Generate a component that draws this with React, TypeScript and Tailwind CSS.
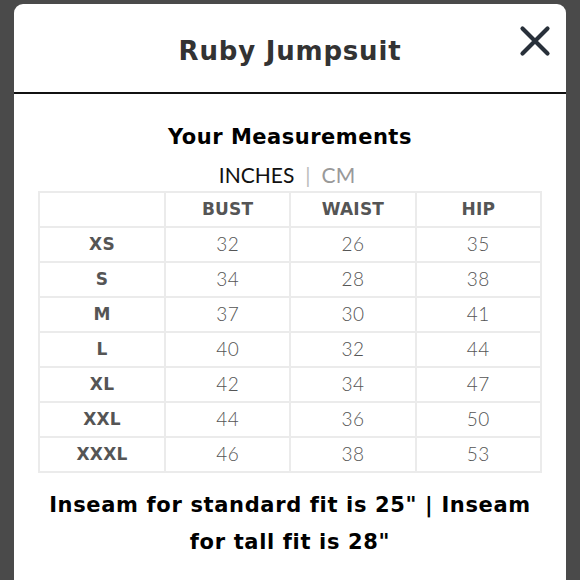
const rows: [string, number, number, number][] = [
  ["XS", 32, 26, 35],
  ["S", 34, 28, 38],
  ["M", 37, 30, 41],
  ["L", 40, 32, 44],
  ["XL", 42, 34, 47],
  ["XXL", 44, 36, 50],
  ["XXXL", 46, 38, 53],
];

const cell = "border-2 border-[#ebebeb]";

export default function App() {
  return (
    <div className="w-[580px] h-[580px] overflow-hidden bg-[#4a4a4a] px-[14px] pt-[4px] font-['Lato',sans-serif]">
      <div className="h-full bg-white rounded-t-[9px]">
        {/* Header */}
        <div className="relative h-[90px] pt-[6px] flex items-center justify-center border-b-2 border-[#111]">
          <h1 className="font-['DejaVu_Sans',sans-serif] text-[26px] font-bold text-[#333] tracking-[0.8px]">
            Ruby Jumpsuit
          </h1>
          <button className="absolute right-[15px] top-[21px] text-[#28303a]">
            <svg width="32" height="32" viewBox="0 0 32 32" fill="none" stroke="currentColor" strokeWidth="4.2" strokeLinecap="round">
              <path d="M3.5 3.5L28.5 28.5M28.5 3.5L3.5 28.5" />
            </svg>
          </button>
        </div>

        {/* Body */}
        <div className="px-[24px] pt-[29px]">
          <h2 className="text-center font-['DejaVu_Sans',sans-serif] text-[21px] font-bold text-black tracking-[0.5px] leading-[28px]">
            Your Measurements
          </h2>
          <div className="mt-[12px] text-center text-[21px] leading-[24px] -translate-x-[3px]">
            <span className="text-[#111]">INCHES</span>
            <span className="text-[#bbb] mx-[11px]">|</span>
            <span className="text-[#999]">CM</span>
          </div>

          <table className="mt-[4px] w-[504px] border-collapse table-fixed">
            <thead>
              <tr className="h-[35px] font-['DejaVu_Sans',sans-serif] text-[17px] font-bold text-[#555] tracking-[0.2px]">
                <th className={`${cell} w-[126px]`}></th>
                <th className={cell}>BUST</th>
                <th className={cell}>WAIST</th>
                <th className={cell}>HIP</th>
              </tr>
            </thead>
            <tbody>
              {rows.map(([size, bust, waist, hip]) => (
                <tr key={size} className="h-[35px] text-center text-[19px] font-light text-[#555] tracking-[0.5px]">
                  <td className={`${cell} font-['DejaVu_Sans',sans-serif] text-[17px] font-bold tracking-[0.2px]`}>{size}</td>
                  <td className={cell}>{bust}</td>
                  <td className={cell}>{waist}</td>
                  <td className={cell}>{hip}</td>
                </tr>
              ))}
            </tbody>
          </table>

          <p className="mt-[14px] mx-auto w-[500px] text-center font-['DejaVu_Sans',sans-serif] text-[21px] font-bold text-black leading-[36.5px] tracking-[0.65px]">
            Inseam for standard fit is 25" | Inseam for tall fit is 28"
          </p>
        </div>
      </div>
    </div>
  );
}
